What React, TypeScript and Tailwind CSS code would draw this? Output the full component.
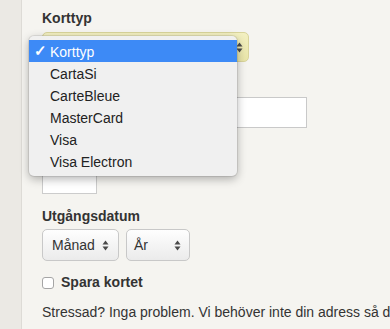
const ARROWS = (
  <svg width="7" height="11" viewBox="0 0 7 11" className="shrink-0">
    <path d="M3.5 0.5 L6.5 4.5 L0.5 4.5 Z" fill="#4a4a4a" />
    <path d="M3.5 10.5 L6.5 6.5 L0.5 6.5 Z" fill="#4a4a4a" />
  </svg>
);

const cardTypes = ["Korttyp", "CartaSi", "CarteBleue", "MasterCard", "Visa", "Visa Electron"];

export default function App() {
  return (
    <div
      className="flex h-[329px] w-[390px] overflow-hidden bg-[#f5f4f0] text-[14px] text-[#333]"
      style={{ fontFamily: '"Liberation Sans", Arial, sans-serif' }}
    >
      {/* Left strip */}
      <div className="w-[22px] shrink-0 border-r border-[#dddbd6] bg-[#ebe9e4]" />

      <div className="relative flex-1 pl-[20px] pt-[10px]">
        <div className="h-[17px] font-bold leading-[17px]">Korttyp</div>

        {/* Closed select, covered by the open menu */}
        <div className="mt-[5px] flex h-[30px] w-[207px] items-center justify-end rounded-[5px] border border-[#d9d49b] bg-gradient-to-b from-[#f3f0c2] to-[#e9e5a8] pr-[5px]">
          {ARROWS}
        </div>

        {/* label hidden under the menu */}
        <div className="mt-[12px] h-[17px]" />
        <div className="mt-[6px] h-[31px] w-[265px] border border-[#c9c9c9] bg-white" />

        {/* label hidden under the menu */}
        <div className="mt-[12px] h-[17px]" />
        <div className="mt-[3px] h-[34px] w-[55px] border border-[#cccccc] bg-white" />

        <div className="mt-[14px] h-[17px] font-bold leading-[17px]">Utgångsdatum</div>
        <div className="mt-[4px] flex gap-[7px]">
          <div className="flex h-[32px] w-[77px] items-center justify-between rounded-[5px] border border-[#c8c8c8] bg-gradient-to-b from-[#fefefe] to-[#ebebeb] pl-[9px] pr-[9px]">
            <span>Månad</span>
            {ARROWS}
          </div>
          <div className="flex h-[32px] w-[64px] items-center justify-between rounded-[5px] border border-[#c8c8c8] bg-gradient-to-b from-[#fefefe] to-[#ebebeb] pl-[7px] pr-[8px]">
            <span>År</span>
            {ARROWS}
          </div>
        </div>

        <div className="mt-[13px] flex h-[17px] items-center gap-[7px]">
          <div className="h-[12px] w-[12px] rounded-[3px] border border-[#a5a5a5] bg-white" />
          <span className="font-bold leading-[17px]">Spara kortet</span>
        </div>

        <p className="mt-[13px] whitespace-nowrap leading-[17px]">
          Stressad? Inga problem. Vi behöver inte din adress så du kan betala snabbt.
        </p>

        {/* Open dropdown menu */}
        <div className="absolute left-[7px] top-[36px] w-[208px] rounded-[5px] bg-[#f0f0f0] py-[4px] shadow-[0_3px_10px_rgba(0,0,0,0.3),0_0_0_1px_rgba(0,0,0,0.08)]">
          {cardTypes.map((t, i) => (
            <div
              key={t}
              className={
                i === 0
                  ? "relative h-[22px] bg-[#3d8af6] pl-[21px] pt-[1px] leading-[22px] text-white"
                  : "relative h-[22px] pl-[21px] pt-[1px] leading-[22px] text-[#222]"
              }
            >
              {i === 0 && <span className="absolute left-[5px] top-[0px] text-[15px] font-bold">✓</span>}
              {t}
            </div>
          ))}
        </div>
      </div>
    </div>
  );
}
